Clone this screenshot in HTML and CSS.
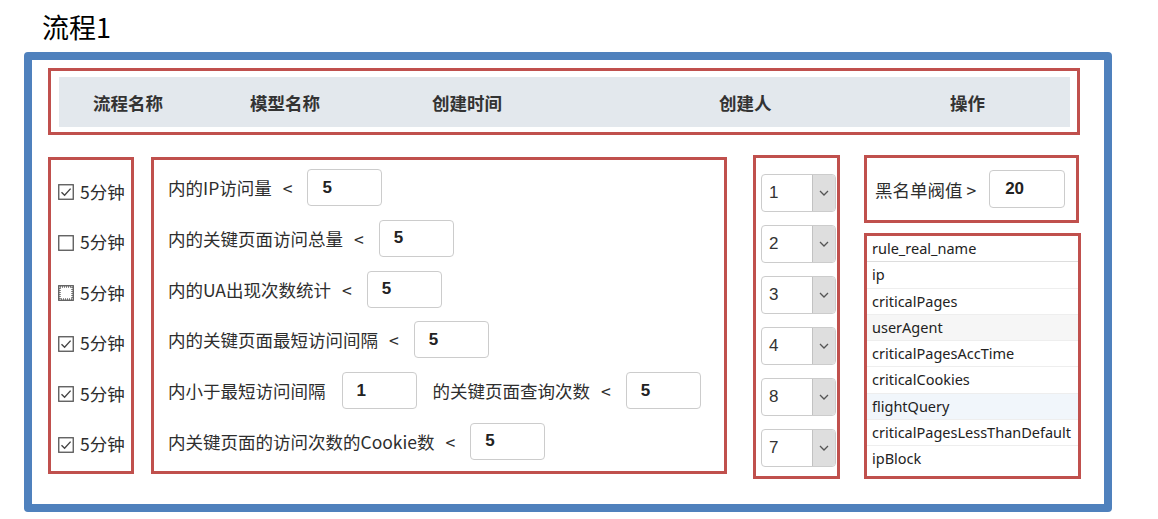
FILE: index.html
```html
<!DOCTYPE html>
<html lang="zh-CN">
<head>
<meta charset="utf-8">
<title>流程1</title>
<link rel="stylesheet" href="styles.css">
</head>
<body>
<h1 class="title">流程1</h1>
<div class="frame">
  <div class="hdr-box">
    <div class="hdr">
      <span class="c1">流程名称</span>
      <span class="c2">模型名称</span>
      <span class="c3">创建时间</span>
      <span class="c4">创建人</span>
      <span class="c5">操作</span>
    </div>
  </div>
  <div class="body">
    <div class="box checks">
      <div class="chk"><svg class="cb" width="16" height="16" viewBox="0 0 16 16"><rect x="0.75" y="0.75" width="14.5" height="14.5" fill="#fff" stroke="#555" stroke-width="1.3"/><path d="M3.5 8.2 L6.6 11.2 L12.6 4.6" fill="none" stroke="#444" stroke-width="1.4"/></svg>5分钟</div>
      <div class="chk"><svg class="cb" width="16" height="16" viewBox="0 0 16 16"><rect x="0.75" y="0.75" width="14.5" height="14.5" fill="#fff" stroke="#555" stroke-width="1.3"/></svg>5分钟</div>
      <div class="chk"><svg class="cb" width="16" height="16" viewBox="0 0 16 16"><rect x="0.75" y="0.75" width="14.5" height="14.5" fill="#fff" stroke="#555" stroke-width="1.3"/><rect x="2" y="2" width="12" height="12" fill="none" stroke="#222" stroke-width="1" stroke-dasharray="1 1"/></svg>5分钟</div>
      <div class="chk"><svg class="cb" width="16" height="16" viewBox="0 0 16 16"><rect x="0.75" y="0.75" width="14.5" height="14.5" fill="#fff" stroke="#555" stroke-width="1.3"/><path d="M3.5 8.2 L6.6 11.2 L12.6 4.6" fill="none" stroke="#444" stroke-width="1.4"/></svg>5分钟</div>
      <div class="chk"><svg class="cb" width="16" height="16" viewBox="0 0 16 16"><rect x="0.75" y="0.75" width="14.5" height="14.5" fill="#fff" stroke="#555" stroke-width="1.3"/><path d="M3.5 8.2 L6.6 11.2 L12.6 4.6" fill="none" stroke="#444" stroke-width="1.4"/></svg>5分钟</div>
      <div class="chk"><svg class="cb" width="16" height="16" viewBox="0 0 16 16"><rect x="0.75" y="0.75" width="14.5" height="14.5" fill="#fff" stroke="#555" stroke-width="1.3"/><path d="M3.5 8.2 L6.6 11.2 L12.6 4.6" fill="none" stroke="#444" stroke-width="1.4"/></svg>5分钟</div>
    </div>
    <div class="box rules">
      <div class="rule"><span>内的IP访问量</span><span class="lt">&lt;</span><span class="inp">5</span></div>
      <div class="rule"><span>内的关键页面访问总量</span><span class="lt">&lt;</span><span class="inp">5</span></div>
      <div class="rule"><span>内的UA出现次数统计</span><span class="lt">&lt;</span><span class="inp">5</span></div>
      <div class="rule"><span>内的关键页面最短访问间隔</span><span class="lt">&lt;</span><span class="inp">5</span></div>
      <div class="rule"><span>内小于最短访问间隔</span><span class="inp mid">1</span><span>的关键页面查询次数</span><span class="lt">&lt;</span><span class="inp">5</span></div>
      <div class="rule"><span>内关键页面的访问次数的Cookie数</span><span class="lt">&lt;</span><span class="inp">5</span></div>
    </div>
    <div class="box selects">
      <div class="sel"><span class="v">1</span><span class="arr"><svg width="10" height="6" viewBox="0 0 10 6"><path d="M1 1 L5 5 L9 1" fill="none" stroke="#555" stroke-width="1.3"/></svg></span></div>
      <div class="sel"><span class="v">2</span><span class="arr"><svg width="10" height="6" viewBox="0 0 10 6"><path d="M1 1 L5 5 L9 1" fill="none" stroke="#555" stroke-width="1.3"/></svg></span></div>
      <div class="sel"><span class="v">3</span><span class="arr"><svg width="10" height="6" viewBox="0 0 10 6"><path d="M1 1 L5 5 L9 1" fill="none" stroke="#555" stroke-width="1.3"/></svg></span></div>
      <div class="sel"><span class="v">4</span><span class="arr"><svg width="10" height="6" viewBox="0 0 10 6"><path d="M1 1 L5 5 L9 1" fill="none" stroke="#555" stroke-width="1.3"/></svg></span></div>
      <div class="sel"><span class="v">8</span><span class="arr"><svg width="10" height="6" viewBox="0 0 10 6"><path d="M1 1 L5 5 L9 1" fill="none" stroke="#555" stroke-width="1.3"/></svg></span></div>
      <div class="sel"><span class="v">7</span><span class="arr"><svg width="10" height="6" viewBox="0 0 10 6"><path d="M1 1 L5 5 L9 1" fill="none" stroke="#555" stroke-width="1.3"/></svg></span></div>
    </div>
    <div class="right">
      <div class="box thr"><span>黑名单阀值 &gt;</span><span class="inp big">20</span></div>
      <div class="box list">
        <div class="li first">rule_real_name</div>
        <div class="li">ip</div>
        <div class="li">criticalPages</div>
        <div class="li gray">userAgent</div>
        <div class="li">criticalPagesAccTime</div>
        <div class="li">criticalCookies</div>
        <div class="li blue">flightQuery</div>
        <div class="li">criticalPagesLessThanDefault</div>
        <div class="li last">ipBlock</div>
      </div>
    </div>
  </div>
</div>
</body>
</html>
```

FILE: styles.css
```css
html, body {
  margin: 0;
  padding: 0;
  background: #fff;
}
body {
  font-family: "Noto Sans CJK SC", "Noto Sans", sans-serif;
  color: #2e2e2e;
}
.title {
  margin: 0;
  height: 52px;
  box-sizing: border-box;
  padding: 9px 0 0 42px;
  font-size: 27px;
  line-height: 36px;
  font-weight: normal;
  color: #000;
}
.frame {
  margin-left: 24px;
  width: 1088px;
  height: 460px;
  box-sizing: border-box;
  border: 8px solid #4f81bd;
  border-radius: 4px;
  padding: 8px 0 0 16px;
  background: #fff;
}
.hdr-box {
  width: 1032px;
  height: 67px;
  box-sizing: border-box;
  border: 3px solid #c0504d;
  padding: 6px 0 0 8px;
}
.hdr {
  width: 1011px;
  height: 50px;
  box-sizing: border-box;
  background: #e3e8ed;
  display: flex;
  align-items: center;
  padding-left: 34px;
  font-weight: bold;
  font-size: 17.5px;
  color: #333;
}
.c1 { width: 157px; }
.c2 { width: 182px; }
.c3 { width: 287px; }
.c4 { width: 231px; }
.body {
  display: flex;
  align-items: flex-start;
  margin-top: 20px;
}
.box {
  box-sizing: border-box;
  border: 3px solid #c0504d;
}
.checks {
  width: 86px;
  height: 317px;
  margin-top: 2px;
  padding: 6px 0 0 7px;
}
.chk {
  display: flex;
  align-items: center;
  gap: 6px;
  height: 50.5px;
  font-size: 17.5px;
}
.cb { flex: none; margin-top: 2px; }
.rules {
  margin-left: 17px;
  width: 576px;
  height: 317px;
  margin-top: 2px;
  padding: 9px 0 0 14px;
  display: flex;
  flex-direction: column;
  gap: 13.8px;
}
.rule {
  display: flex;
  align-items: center;
  height: 37px;
  font-size: 17.5px;
  white-space: nowrap;
}
.lt {
  margin: 0 15px 0 11px;
}
.inp {
  flex: none;
  width: 75px;
  height: 37px;
  box-sizing: border-box;
  border: 1px solid #ccc;
  border-radius: 4px;
  padding-left: 14px;
  display: flex;
  align-items: center;
  font-family: "Liberation Sans", Arial, sans-serif;
  font-weight: bold;
  font-size: 17px;
  color: #222;
}
.inp.mid { margin: 0 16px 0 16px; }
.selects {
  margin-left: 26px;
  width: 87px;
  height: 324px;
  padding: 16px 0 0 5px;
  display: flex;
  flex-direction: column;
  gap: 13px;
}
.sel {
  width: 75px;
  height: 38px;
  box-sizing: border-box;
  border: 1px solid #ccc;
  border-radius: 4px;
  display: flex;
  overflow: hidden;
}
.sel .v {
  flex: 1;
  padding-left: 7px;
  font-family: "Liberation Sans", Arial, sans-serif;
  font-size: 17px;
  line-height: 36px;
  color: #333;
}
.sel .arr {
  width: 22px;
  background: #dedede;
  border-left: 1px solid #c2c2c2;
  display: flex;
  align-items: center;
  justify-content: center;
}
.right {
  margin-left: 24px;
  width: 217px;
  display: flex;
  flex-direction: column;
}
.thr {
  width: 215px;
  height: 68px;
  padding-left: 8px;
  display: flex;
  align-items: center;
  font-size: 17.5px;
  white-space: nowrap;
}
.inp.big {
  width: 76px;
  height: 38px;
  margin-left: 13px;
  padding-left: 15px;
}
.list {
  margin-top: 10px;
  width: 217px;
  height: 246px;
  font-family: "Noto Sans", sans-serif;
  font-size: 14.5px;
  color: #222;
}
.li {
  height: 26.3px;
  line-height: 25px;
  box-sizing: border-box;
  padding-left: 5px;
  border-bottom: 1.5px solid #eee;
}
.li.first { border-bottom-color: #ddd; }
.li.last { border-bottom: none; }
.li.gray { background: #f6f6f6; }
.li.blue { background: #f1f6fb; }
```
